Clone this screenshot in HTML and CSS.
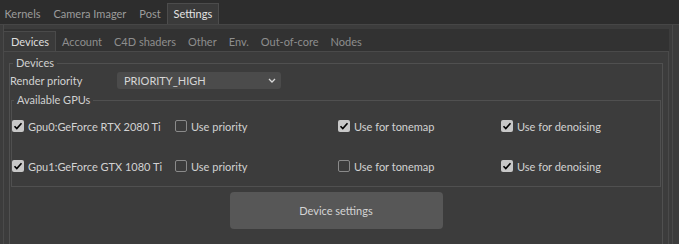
FILE: index.html
```html
<!DOCTYPE html>
<html lang="en">
<head>
    <meta charset="UTF-8">
    <title>Settings</title>
    <link rel="stylesheet" href="styles.css">
</head>
<body>
    <!-- Main tabs -->
    <div class="top-bar">
        <div class="tab">Kernels</div>
        <div class="tab">Camera Imager</div>
        <div class="tab">Post</div>
        <div class="tab active">Settings</div>
    </div>

    <div class="panel">
        <!-- Settings sub tabs -->
        <div class="sub-bar">
            <div class="sub-tab active">Devices</div>
            <div class="sub-tab">Account</div>
            <div class="sub-tab">C4D shaders</div>
            <div class="sub-tab">Other</div>
            <div class="sub-tab">Env.</div>
            <div class="sub-tab">Out-of-core</div>
            <div class="sub-tab">Nodes</div>
        </div>

        <div class="page">
            <fieldset class="group devices">
                <legend>Devices</legend>
                <div class="render-row">
                    <span class="render-label">Render priority</span>
                    <div class="select">
                        <span>PRIORITY_HIGH</span>
                        <svg width="8" height="5" viewBox="0 0 8 5"><polyline points="1,1 4,4 7,1" fill="none" stroke="#d8d8d8" stroke-width="1.3"/></svg>
                    </div>
                </div>

                <fieldset class="group gpus">
                    <legend>Available GPUs</legend>
                    <div class="gpu-row">
                        <label class="opt"><span class="check on"></span>Gpu0:GeForce RTX 2080 Ti</label>
                        <label class="opt"><span class="check"></span>Use priority</label>
                        <label class="opt"><span class="check on"></span>Use for tonemap</label>
                        <label class="opt"><span class="check on"></span>Use for denoising</label>
                    </div>
                    <div class="gpu-row">
                        <label class="opt"><span class="check on"></span>Gpu1:GeForce GTX 1080 Ti</label>
                        <label class="opt"><span class="check"></span>Use priority</label>
                        <label class="opt"><span class="check"></span>Use for tonemap</label>
                        <label class="opt"><span class="check on"></span>Use for denoising</label>
                    </div>
                </fieldset>

                <div class="button-row">
                    <button class="button">Device settings</button>
                </div>
            </fieldset>
        </div>
    </div>
</body>
</html>
```

FILE: styles.css
```css
body {
    font-family: Lato, "Noto Sans", sans-serif;
    font-size: 11px;
    background-color: #3c3c3c;
    color: #d2d2d2;
    margin: 0;
    padding: 0;
    height: 244px;
    overflow: hidden;
    display: flex;
    flex-direction: column;
}
/* Main tabs */
.top-bar {
    display: flex;
    align-items: flex-end;
    height: 24px;
    flex-shrink: 0;
    background-color: #2d2d2d;
    border-bottom: 1px solid #464646;
    margin-left: -2px;
}
.tab {
    height: 20px;
    line-height: 20px;
    padding: 0 5.5px;
    color: #9c9c9c;
    border: 1px solid transparent;
    border-bottom: none;
}
.tab.active {
    background-color: #3a3a3a;
    border-color: #4c4c4c;
    color: #e4e4e4;
}
.panel {
    flex: 1;
    min-height: 0;
    display: flex;
    flex-direction: column;
    margin: 0 6px 0 3px;
    padding-top: 4px;
    border-left: 1px solid #4a4a4a;
    border-right: 1px solid #4a4a4a;
}
/* Sub tabs */
.sub-bar {
    display: flex;
    align-items: flex-end;
    height: 22px;
    flex-shrink: 0;
    background-color: #323232;
    margin-right: 3px;
}
.sub-tab {
    height: 19px;
    line-height: 19px;
    padding: 0 5px;
    color: #8e8e8e;
    border: 1px solid transparent;
    border-bottom: none;
}
.sub-tab.active {
    background-color: #3a3a3a;
    border-color: #4a4a4a;
    color: #dedede;
    margin-left: -1px;
    padding: 0 6px 0 7px;
}
.page {
    flex: 1;
    min-height: 0;
    overflow: hidden;
    margin-right: 3px;
    border-top: 1px solid #4a4a4a;
    border-right: 1px solid #4a4a4a;
    padding-top: 4px;
}
/* Group boxes */
.group {
    margin: 0;
    padding: 0;
    border: 1px solid #505050;
    min-width: 0;
}
.group legend {
    padding: 0 3px;
    margin-left: 3px;
    line-height: 14px;
    color: #d0d0d0;
}
.devices {
    margin: 0 5px;
    height: 190px;
}
.render-row {
    display: flex;
    align-items: center;
    height: 20px;
}
.render-label {
    width: 107px;
}
.select {
    display: flex;
    align-items: center;
    justify-content: space-between;
    width: 164px;
    height: 17px;
    box-sizing: border-box;
    padding: 0 5px 0 7px;
    background-color: #4b4b4b;
    border-radius: 3px;
    color: #d6d6d6;
}
.gpus {
    margin: 3px 1px 0 1px;
}
.gpus legend {
    margin-left: 2px;
}
.gpu-row {
    display: grid;
    grid-template-columns: repeat(4, 163px);
    align-items: center;
    height: 40px;
}
.gpu-row:first-of-type {
    margin-top: -1px;
}
.opt {
    display: flex;
    align-items: center;
    gap: 4px;
}
.check {
    width: 12px;
    height: 12px;
    box-sizing: border-box;
    border: 1px solid #8a8a8a;
    border-radius: 2px;
}
.check.on {
    border: none;
    background: #c8c8c8 url("data:image/svg+xml;utf8,<svg xmlns='http://www.w3.org/2000/svg' width='12' height='12'><polyline points='2.5,6.2 4.8,8.6 9.5,3.2' fill='none' stroke='black' stroke-width='1.6'/></svg>") no-repeat center;
}
.button-row {
    display: flex;
    justify-content: center;
    margin-top: 5px;
}
.button {
    width: 213px;
    height: 37px;
    border: none;
    border-radius: 4px;
    background-color: #575757;
    color: #d4d4d4;
    font-family: inherit;
    font-size: 11px;
}
```
